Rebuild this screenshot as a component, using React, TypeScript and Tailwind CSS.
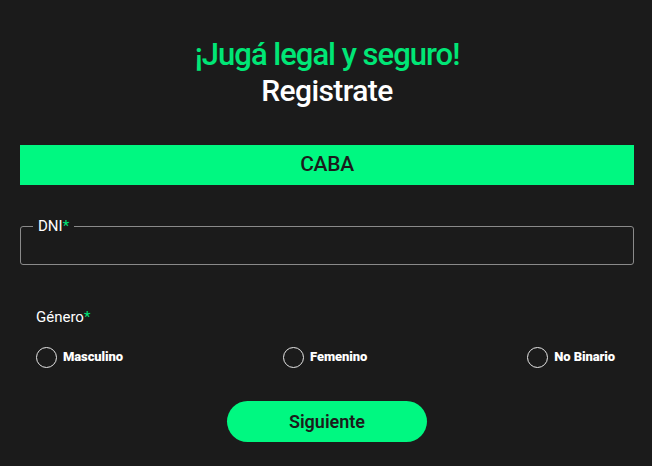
const GREEN = 'bg-[#00f881]';

function Radio({ label }: { label: string }) {
  return (
    <label className="flex items-center gap-[6px]">
      <span className="w-[21px] h-[21px] rounded-full border border-[#e6e6e6]" />
      <span className="text-[13px] font-black text-white tracking-[-0.1px]">{label}</span>
    </label>
  );
}

export default function App() {
  return (
    <div className="w-[652px] h-[466px] bg-[#1b1b1b] font-['Roboto',sans-serif] pl-5 pr-[18px] pt-[37px]">
      {/* títulos */}
      <div className="flex flex-col items-center">
        <h1 className="text-[31px] leading-[36px] font-medium text-[#00e676] tracking-[-1px]">¡Jugá legal y seguro!</h1>
        <h2 className="text-[30px] leading-[36px] font-medium text-white tracking-[-0.6px]">Registrate</h2>
      </div>

      {/* provincia */}
      <div className={`${GREEN} h-[40px] mt-[36px] flex items-center justify-center`}>
        <span className="text-[21px] font-medium text-[#1b1b1b] tracking-[-0.3px]">CABA</span>
      </div>

      {/* DNI */}
      <fieldset className="mt-[34px] h-[46px] border border-[#8a8a8a] rounded-[3px] px-[12px]">
        <legend className="px-[5px] text-[15px] text-white leading-[14px]">
          DNI<span className="text-[#00e676]">*</span>
        </legend>
      </fieldset>

      {/* género */}
      <div className="mt-[41px] px-4">
        <div className="text-[15px] text-white">
          Género<span className="text-[#00e676]">*</span>
        </div>
        <div className="mt-[18px] flex justify-between pr-[3px]">
          <Radio label="Masculino" />
          <Radio label="Femenino" />
          <Radio label="No Binario" />
        </div>
      </div>

      {/* acción */}
      <div className="mt-[33px] flex justify-center">
        <button className={`${GREEN} w-[200px] h-[41px] rounded-full text-[18px] font-semibold text-[#1b1b1b]`}>
          Siguiente
        </button>
      </div>
    </div>
  );
}
